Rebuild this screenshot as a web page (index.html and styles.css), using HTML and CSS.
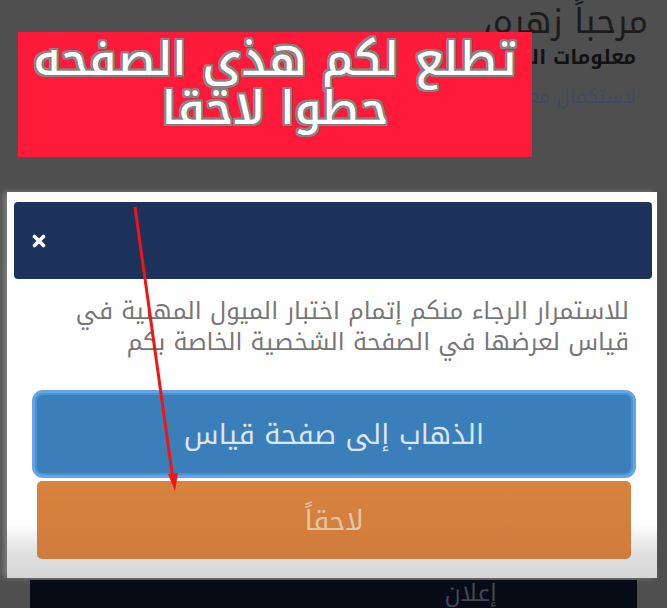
FILE: index.html
```html
<!DOCTYPE html>
<html lang="ar">
<head>
<meta charset="utf-8">
<title>قياس</title>
<link rel="stylesheet" href="styles.css">
</head>
<body>
<div class="screen">
  <div class="bg-header" dir="rtl">
    <div class="greet">مرحباً زهره،</div>
    <div class="info">معلومات الحساب الشخصي</div>
    <div class="link">لاستكمال معلوماتك الشخصية</div>
  </div>

  <div class="modal" dir="rtl">
    <div class="modal-head">
      <svg class="close" width="14" height="14" viewBox="0 0 14 14"><path d="M2.5 2.5 L11.5 11.5 M11.5 2.5 L2.5 11.5" stroke="#fff" stroke-width="3.6" stroke-linecap="round"/></svg>
    </div>
    <p class="modal-text">للاستمرار الرجاء منكم إتمام اختبار الميول المهنية في<br>قياس لعرضها في الصفحة الشخصية الخاصة بكم</p>
    <div class="actions">
      <button class="btn btn-primary">الذهاب إلى صفحة قياس</button>
      <button class="btn btn-later">لاحقاً</button>
    </div>
  </div>

  <div class="ad" dir="rtl"><span>إعلان</span></div>

  <div class="banner" dir="rtl">
    <div>تطلع لكم هذي الصفحه</div>
    <div>حطوا لاحقا</div>
  </div>

  <svg class="arrow" width="667" height="608" viewBox="0 0 667 608">
    <line x1="135" y1="207" x2="172.5" y2="476" stroke="#f01414" stroke-width="3"/>
    <polygon points="175,491 168,474 178,473" fill="#f01414"/>
  </svg>
</div>
</body>
</html>
```

FILE: styles.css
```css
html, body {
  margin: 0;
  padding: 0;
  background: #4f4f4f;
}

.screen {
  position: relative;
  width: 667px;
  height: 608px;
  overflow: hidden;
  background: #4f4f4f;
  font-family: "Noto Kufi Arabic", "Noto Sans Arabic", "DejaVu Sans", sans-serif;
}

.bg-header {
  height: 192px;
  box-sizing: border-box;
  padding: 0 31px 0 0;
  text-align: right;
  white-space: nowrap;
}

.greet {
  font-size: 34px;
  line-height: 42px;
  padding-top: 1px;
  color: #1c1c1c;
  margin-right: -12px;
  margin-bottom: -1px;
}

.info {
  font-size: 20px;
  font-weight: bold;
  line-height: 30px;
  margin-top: 0;
  color: #121212;
}

.link {
  font-size: 19px;
  line-height: 30px;
  margin-top: 10px;
  color: #3f4b5e;
}

.modal {
  margin: 0 10px 0 7px;
  height: 386px;
  box-sizing: border-box;
  padding: 10px 5px 0 7px;
  background: linear-gradient(to bottom, #ffffff 0%, #ffffff 86%, #e2e2e2 93%, #d6d6d6 100%);
  box-shadow: -4px 0 6px rgba(170, 170, 170, 0.5);
}

.modal-head {
  height: 77px;
  background: #1e335b;
  border-radius: 4px;
  display: flex;
  align-items: center;
  justify-content: flex-end;
  padding-left: 18px;
}

.close {
  display: block;
}

.modal-text {
  margin: 17px 23px 0 10px;
  font-size: 24px;
  line-height: 31px;
  color: #767676;
  text-align: right;
  white-space: nowrap;
}

.actions {
  margin-top: 37px;
  padding: 0 21px 0 23px;
  display: flex;
  flex-direction: column;
  gap: 8px;
}

.btn {
  display: block;
  width: 100%;
  height: 78px;
  border: none;
  font-family: inherit;
  cursor: pointer;
}

.btn-primary {
  background: #3a7fba;
  border-radius: 6px;
  box-shadow: 0 0 0 2px #4b92d4, 0 0 0 5px #63a5e8;
  color: #dbe6f0;
  font-size: 28px;
  padding-top: 2px;
}

.btn-later {
  background: linear-gradient(to bottom, #d8843f, #cf7b3c);
  border-radius: 5px;
  color: #e6c4a6;
  font-size: 27px;
  padding-top: 2px;
}

.ad {
  margin: 2px 30px 0 30px;
  height: 40px;
  background: #060b16;
  text-align: right;
  padding-right: 140px;
  overflow: hidden;
}

.ad span {
  display: inline-block;
  margin-top: -20px;
  font-size: 24px;
  line-height: 30px;
  color: #45464d;
}

.banner {
  position: absolute;
  left: 18px;
  top: 32px;
  width: 514px;
  height: 125px;
  background: #ff1a3a;
  box-sizing: border-box;
  padding-top: 3px;
  text-align: center;
  color: #ffffff;
  font-size: 46px;
  line-height: 49px;
  font-weight: 500;
  text-shadow:
    0 0 2px #7a7a7a, 0 0 2px #7a7a7a, 0 0 3px #7a7a7a,
    2px 0 0 #8a8a8a, -2px 0 0 #8a8a8a, 0 2px 0 #8a8a8a, 0 -2px 0 #8a8a8a,
    2px 2px 0 #8a8a8a, -2px -2px 0 #8a8a8a, 2px -2px 0 #8a8a8a, -2px 2px 0 #8a8a8a;
}

.arrow {
  position: absolute;
  left: 0;
  top: 0;
  pointer-events: none;
}
```
